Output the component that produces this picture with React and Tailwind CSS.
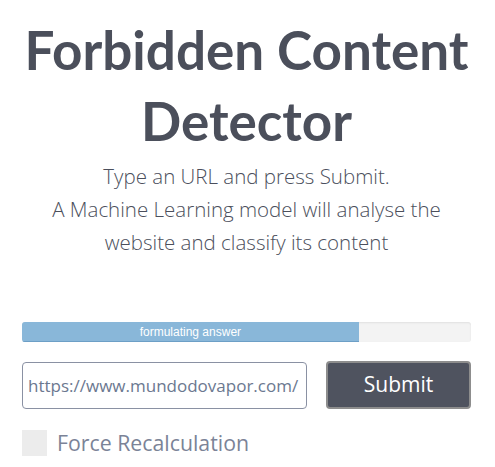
export default function App() {
    const progress = 75;

    return (
        <div className="min-h-screen bg-white" style={{ fontFamily: '"Open Sans", "Noto Sans", sans-serif' }}>
            <div className="w-[449px] ml-[22px] pt-[14px]">
                <h1
                    className="text-center font-bold text-[53px] leading-[71px] text-[#4b4f5b] whitespace-nowrap"
                    style={{ fontFamily: 'Lato, "Open Sans", sans-serif' }}
                >
                    Forbidden Content
                    <br />
                    Detector
                </h1>
                <div className="mt-[4px] text-center text-[20.5px] leading-[33px] font-light text-[#4b4f5c]">
                    <p>Type an URL and press Submit.</p>
                    <p>A Machine Learning model will analyse the</p>
                    <p>website and classify its content</p>
                </div>

                <div className="mt-[63px] h-[20px] w-full rounded-[3px] bg-[#f3f3f3] overflow-hidden shadow-[inset_0_1px_2px_rgba(0,0,0,0.08)]">
                    <div
                        className="h-full bg-[#89b7d9] border-b border-[#6d9fc6] flex items-center justify-center text-white text-[12px] leading-none"
                        style={{ width: `${progress}%`, fontFamily: '"Liberation Sans", Arial, sans-serif' }}
                    >
                        formulating answer
                    </div>
                </div>

                <div className="mt-[20px] flex gap-[19px]">
                    <input
                        type="text"
                        defaultValue="https://www.mundodovapor.com/"
                        className="w-[285px] h-[47px] border border-[#8a91a3] rounded-[4px] px-[5px] text-[17px] text-[#6b7890] outline-none"
                    />
                    <button className="flex-1 h-[48px] -mt-[1px] bg-[#4f535f] border-2 border-[#8d8d8d] rounded-[4px] text-white text-[21px]">
                        Submit
                    </button>
                </div>

                <label className="mt-[18px] flex items-center gap-[10px]">
                    <span className="w-[25px] h-[26px] bg-[#ececec]" />
                    <span className="text-[21.3px] text-[#7b8397]">Force Recalculation</span>
                </label>
            </div>
        </div>
    );
}
